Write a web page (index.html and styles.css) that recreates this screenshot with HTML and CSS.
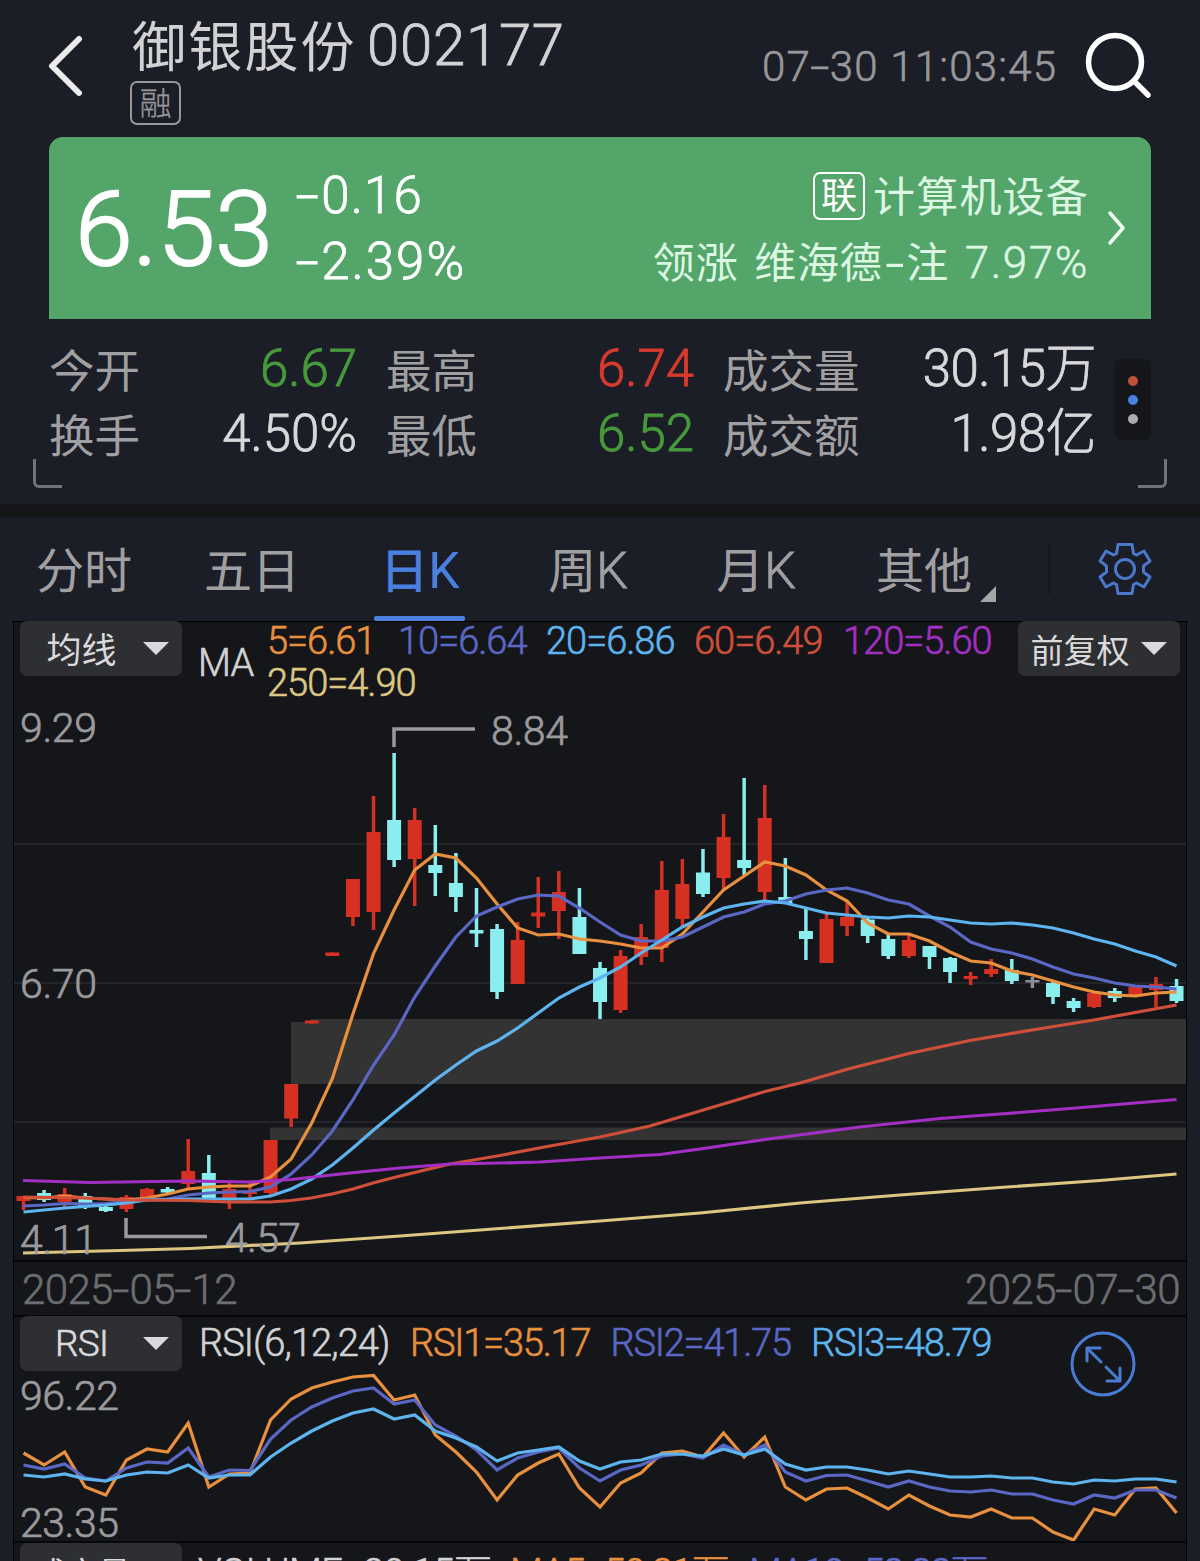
FILE: index.html
```html
<!DOCTYPE html>
<html lang="zh-CN">
<head>
    <meta charset="UTF-8">
    <meta name="viewport" content="width=device-width, initial-scale=1.0">
    <title>御银股份 002177</title>
    <link rel="stylesheet" href="styles.css">
</head>
<body>
    <header class="header">
        <svg class="back" viewBox="0 0 40 64" width="40" height="64"><path d="M33 6 L6 33 L33 60"/></svg>
        <div class="title">
            <h1><span class="stock-name">御银股份</span><span class="stock-code">002177</span></h1>
            <span class="badge badge-rong">融</span>
        </div>
        <div class="time">07<span class="dash">-</span>30 11:03:45</div>
        <svg class="search" viewBox="0 0 70 70" width="70" height="70"><circle cx="32" cy="31" r="26.5"/><path d="M51 50 L65 64"/></svg>
    </header>

    <section class="quote">
        <div class="price">6.53</div>
        <div class="change">
            <div><span class="dash">-</span>0.16</div>
            <div class="percent"><span class="dash">-</span>2.39%</div>
        </div>
        <div class="sector">
            <div class="sector-name"><span class="badge badge-lian">联</span><span>计算机设备</span></div>
            <div class="leader">领涨 维海德<span class="dash">-</span>注 <span class="leader-value">7.97%</span></div>
        </div>
        <svg class="more" viewBox="0 0 20 36" width="20" height="36"><path d="M3 3 L16 18 L3 33"/></svg>
    </section>

    <section class="stats">
        <div class="stats-grid">
            <div class="stat"><span>今开</span><b class="down">6.67</b></div>
            <div class="stat"><span>最高</span><b class="up">6.74</b></div>
            <div class="stat"><span>成交量</span><b class="big">30.15万</b></div>
            <div class="stat"><span>换手</span><b>4.50%</b></div>
            <div class="stat"><span>最低</span><b class="down">6.52</b></div>
            <div class="stat"><span>成交额</span><b class="big">1.98亿</b></div>
        </div>
        <div class="dots"><i class="dot-red"></i><i class="dot-blue"></i><i class="dot-grey"></i></div>
        <i class="corner corner-left"></i>
        <i class="corner corner-right"></i>
    </section>

    <nav class="tabs">
        <div class="tab">分时</div>
        <div class="tab">五日</div>
        <div class="tab active">日<span>K</span></div>
        <div class="tab">周<span>K</span></div>
        <div class="tab">月<span>K</span></div>
        <div class="tab tab-more">其他</div>
        <div class="settings">
            <svg viewBox="-30 -30 60 60" width="60" height="60">
                <path d="M-7 -24.5 H7 L8.5 -15.5 L11.5 -14 L19 -18 L25 -8 L18.5 -3 V3 L25 8 L19 18 L11.5 14 L8.5 15.5 L7 24.5 H-7 L-8.5 15.5 L-11.5 14 L-19 18 L-25 8 L-18.5 3 V-3 L-25 -8 L-19 -18 L-11.5 -14 L-8.5 -15.5 Z"/>
                <circle r="9.5"/>
            </svg>
        </div>
    </nav>

    <main class="charts">
        <section class="panel k-panel">
            <div class="k-head">
                <button class="select">均线</button>
                <span class="ma-label">MA</span>
                <div class="ma-list">
                    <span class="c-orange">5=6.61</span>
                    <span class="c-indigo">10=6.64</span>
                    <span class="c-sky">20=6.86</span>
                    <span class="c-red">60=6.49</span>
                    <span class="c-purple">120=5.60</span>
                    <span class="c-yellow">250=4.90</span>
                </div>
                <button class="select select-right">前复权</button>
            </div>
            <svg id="kChart" class="chart" viewBox="14 700 1172 560" width="1172" height="560"></svg>
        </section>

        <section class="panel dates">
            <span>2025<i class="dash">-</i>05<i class="dash">-</i>12</span>
            <span>2025<i class="dash">-</i>07<i class="dash">-</i>30</span>
        </section>

        <section class="panel rsi-panel">
            <div class="rsi-head">
                <button class="select select-latin">RSI</button>
                <span class="rsi-name">RSI(6,12,24)</span>
                <span class="c-orange">RSI1=35.17</span>
                <span class="c-indigo">RSI2=41.75</span>
                <span class="c-sky">RSI3=48.79</span>
            </div>
            <svg id="rsiChart" class="chart" viewBox="14 1371 1172 170" width="1172" height="170"></svg>
            <svg class="expand" viewBox="0 0 66 66" width="66" height="66">
                <circle cx="33" cy="33" r="31"/>
                <path d="M30 17 H17 V30 M17 17 L31 31 M36 36 L50 50 M50 37 V50 H37"/>
            </svg>
        </section>

        <section class="panel vol-panel">
            <button class="select select-vol">成交量</button>
            <span class="vol-name">VOLUME=30.15万</span>
            <span class="c-orange">MA5=50.21万</span>
            <span class="c-indigo">MA10=58.82万</span>
        </section>
    </main>

    <script src="script.js"></script>
</body>
</html>
```
FILE: styles.css
```css
* {
    box-sizing: border-box;
}
body {
    margin: 0;
    width: 1200px;
    height: 1561px;
    overflow: hidden;
    background-color: #1b1e26;
    color: #d2d2d4;
    font-family: Roboto, "Noto Sans CJK SC", sans-serif;
    font-weight: 300;
    -webkit-text-stroke: 0.6px;
}
svg {
    display: block;
    fill: none;
    stroke-linecap: round;
    stroke-linejoin: round;
}
.dash {
    display: inline-block;
    margin: 0 0.08em;
    font-style: normal;
    letter-spacing: 0;
    transform: scaleX(1.65);
}

/* header */
.header {
    display: flex;
    height: 137px;
    padding-left: 46px;
}
.back {
    margin-top: 33px;
    stroke: #ececec;
    stroke-width: 6;
}
.title {
    margin-left: 44px;
    width: 600px;
}
.title h1 {
    display: flex;
    margin: 15px 0 6px 2px;
    font-size: 58px;
    line-height: 60px;
    font-weight: 300;
}
.stock-name {
    position: relative;
    top: 4px;
    font-size: 54px;
    font-weight: 400;
    letter-spacing: 2.2px;
    width: 235px;
    -webkit-text-stroke: 0;
}
.stock-code {
    letter-spacing: 0.8px;
    -webkit-text-stroke: 0.8px;
}
.badge {
    display: flex;
    align-items: center;
    justify-content: center;
    border: 2px solid;
    border-radius: 7px;
}
.badge-rong {
    width: 51px;
    height: 44px;
    padding-top: 2px;
    font-size: 32px;
    line-height: 38px;
    color: #98989b;
    -webkit-text-stroke: 0.3px;
}
.time {
    margin-top: 42px;
    width: 324px;
    margin-left: 32px;
    font-size: 42px;
    line-height: 50px;
    letter-spacing: 1.2px;
    color: #98989b;
    white-space: nowrap;
}
.search {
    flex: none;
    margin-top: 31px;
    margin-left: -3px;
    stroke: #fff;
    stroke-width: 5.5;
}

/* green price card */
.quote {
    display: flex;
    height: 182px;
    margin: 0 49px;
    border-radius: 14px 14px 0 0;
    background-color: #53a56a;
    color: #fff;
}
.price {
    width: 247px;
    padding: 33px 0 0 26px;
    font-size: 104px;
    line-height: 120px;
    -webkit-text-stroke: 2px;
}
.change {
    padding-top: 26px;
    font-size: 51px;
    line-height: 66px;
    letter-spacing: 1.1px;
    -webkit-text-stroke: 0.8px;
}
.change .dash {
    margin: 0 0.14em 0 0.07em;
}
.percent {
    letter-spacing: 2px;
}
.sector {
    flex: 1;
    padding-top: 29px;
    text-align: right;
    font-size: 42px;
    line-height: 66px;
    color: #dcf7e2;
}
.sector-name {
    display: flex;
    align-items: center;
    justify-content: flex-end;
    height: 64px;
    letter-spacing: 1.2px;
    font-weight: 400;
    -webkit-text-stroke: 0;
}
.badge-lian {
    width: 52px;
    height: 48px;
    margin-right: 8px;
    margin-top: -5px;
    padding-top: 2px;
    font-size: 36px;
    line-height: 42px;
    letter-spacing: 0;
    color: #fff;
}
.leader {
    letter-spacing: 0.8px;
    word-spacing: 4.5px;
    font-weight: 400;
    -webkit-text-stroke: 0;
}
.leader .dash {
    margin: 0 6px;
}
.leader-value {
    font-size: 44px;
    font-weight: 300;
    letter-spacing: 1.6px;
    -webkit-text-stroke: 0.6px;
}
.more {
    margin: 73px 24px 0 18px;
    stroke: #f0fff2;
    stroke-width: 3.5;
}

/* numbers under the card */
.stats {
    position: relative;
    display: flex;
    height: 185px;
    padding: 17px 49px 0;
}
.stats-grid {
    display: grid;
    grid-template-columns: 308px 308px 373px;
    grid-template-rows: 65px 65px;
    column-gap: 29px;
}
.stat {
    display: flex;
    align-items: center;
    justify-content: space-between;
    line-height: 65px;
    color: #a0a0a3;
}
.stat span {
    padding-top: 8px;
    font-size: 45.5px;
    font-weight: 400;
    -webkit-text-stroke: 0;
}
.stat b {
    font-size: 51px;
    font-weight: 300;
    color: #d8d8da;
    -webkit-text-stroke: 0.8px;
}
.stat .big {
    letter-spacing: -0.5px;
}
.stat .down {
    color: #479a3b;
}
.stat .up {
    color: #d83a2d;
}
.dots {
    display: flex;
    flex-direction: column;
    align-items: center;
    justify-content: center;
    gap: 9px;
    width: 36px;
    height: 81px;
    margin: 23px 0 0 19px;
    border-radius: 6px;
    background-color: #14161a;
}
.dots i {
    width: 10px;
    height: 10px;
    border-radius: 50%;
}
.dot-red {
    background-color: #bd513a;
}
.dot-blue {
    background-color: #4a80e6;
}
.dot-grey {
    background-color: #acacb0;
}
.corner {
    position: absolute;
    bottom: 16px;
    width: 29px;
    height: 29px;
    border-bottom: 3px solid #717276;
}
.corner-left {
    left: 33px;
    border-left: 3px solid #717276;
    border-bottom-left-radius: 6px;
}
.corner-right {
    right: 33px;
    border-right: 3px solid #717276;
    border-bottom-right-radius: 6px;
}

/* period tabs */
.tabs {
    display: grid;
    grid-template-columns: repeat(6, 168px) 192px;
    height: 117px;
    border-top: 13px solid #15161a;
}
.tab {
    position: relative;
    text-align: center;
    font-size: 48px;
    font-weight: 400;
    line-height: 109px;
    color: #a0a0a3;
    -webkit-text-stroke: 0;
}
.tab span {
    font-size: 50px;
    font-weight: 300;
    -webkit-text-stroke: 0.8px;
}
.tab.active {
    color: #4a80e0;
    -webkit-text-stroke: 0.8px;
}
.tab.active span {
    font-weight: 400;
    -webkit-text-stroke: 0;
}
.tab.active::after {
    content: "";
    position: absolute;
    left: 38px;
    top: 99px;
    width: 91px;
    height: 5px;
    border-radius: 2px;
    background-color: #4a80e0;
}
.tab-more::after {
    content: "";
    position: absolute;
    right: 12px;
    top: 69px;
    border-left: 16px solid transparent;
    border-bottom: 16px solid #a5a5a7;
}
.settings {
    height: 50px;
    margin: 27px 0 0 40px;
    border-left: 2px solid #14161b;
}
.settings svg {
    margin: -5px 0 0 45px;
    stroke: #4a78cc;
    stroke-width: 3;
}

/* chart panels */
.charts {
    width: 1174px;
    margin: 0 auto;
    border: 1px solid #000;
    border-bottom: 0;
    background-color: #15161a;
    font-size: 38px;
}
.panel {
    position: relative;
}
.chart {
    overflow: visible;
    stroke-linecap: butt;
}
.select {
    position: relative;
    flex: none;
    width: 162px;
    height: 55px;
    margin: 0 0 0 6px;
    padding: 2px 52px 0 13px;
    border: 0;
    border-radius: 7px;
    background-color: #2e2f33;
    color: #dadadc;
    font: 400 35px/58px Roboto, "Noto Sans CJK SC", sans-serif;
    text-align: center;
    white-space: nowrap;
    -webkit-text-stroke: 0;
}
.select::after {
    content: "";
    position: absolute;
    right: 13px;
    top: 21px;
    border: 13px solid transparent;
    border-top-color: #dadadc;
    border-bottom: 0;
}
.select-latin {
    padding-top: 0;
    font-size: 37px;
    font-weight: 300;
    line-height: 55px;
    letter-spacing: -0.8px;
    -webkit-text-stroke: 0.6px;
}
.select-vol {
    padding-right: 50px;
    font-size: 32px;
}
.c-orange {
    color: #e8903e;
}
.c-indigo {
    color: #5a67c4;
}
.c-sky {
    color: #5db4ee;
}
.c-red {
    color: #cf4f3a;
}
.c-purple {
    color: #a42fc4;
}
.c-yellow {
    color: #dcc682;
}
.k-head {
    display: flex;
    height: 78px;
    margin-top: -1px;
}
.ma-label {
    width: 85px;
    padding: 21px 0 0 16px;
    line-height: 42px;
    letter-spacing: -0.8px;
}
.ma-list {
    display: grid;
    grid-template-columns: 131px 148px 148px 149px 160px;
    grid-auto-rows: 42px;
    width: 751px;
    margin-top: -1px;
    line-height: 42px;
    letter-spacing: -1px;
    white-space: nowrap;
}
.select-right {
    margin-left: 0;
    padding-left: 10px;
    padding-right: 48px;
    font-size: 33px;
}
.k-panel {
    height: 639px;
}
.k-panel .chart {
    margin-top: 1px;
}
.dates {
    display: flex;
    justify-content: space-between;
    height: 55px;
    padding: 0 6px 0 8px;
    border-top: 2px solid #07080a;
    font-size: 42px;
    line-height: 56px;
    letter-spacing: -0.6px;
    color: #6c6d70;
}
.dates .dash {
    margin: 0 2.3px;
    transform: scaleX(1.45);
}
.rsi-panel {
    height: 226px;
    border-top: 2px solid #07080a;
}
.rsi-head {
    display: flex;
    height: 55px;
    margin-top: -1px;
    line-height: 55px;
    letter-spacing: -1.2px;
}
.rsi-head span {
    width: 200.5px;
}
.rsi-head .rsi-name {
    width: 228px;
    padding-left: 17px;
    letter-spacing: -0.9px;
}
.rsi-panel .chart {
    margin-top: 1px;
}
.expand {
    position: absolute;
    left: 1055.5px;
    top: 14px;
    stroke: #4a7bd2;
    stroke-width: 3;
}
.vol-panel {
    display: flex;
    height: 22px;
    overflow: hidden;
    border-top: 2px solid #07080a;
    line-height: 60px;
}
.vol-panel span {
    width: 239px;
    white-space: nowrap;
    letter-spacing: -1.2px;
}
.vol-panel .vol-name {
    width: 328px;
    padding-left: 16px;
    letter-spacing: -0.5px;
}

/* svg parts */
.grid {
    stroke: #232427;
    stroke-width: 2;
}
.gap {
    fill: #333;
}
.axis {
    fill: #9a9a9d;
    stroke: #9a9a9d;
    stroke-width: 0.7;
    font-size: 41px;
}
.mark {
    stroke: #9a9a9d;
    stroke-width: 3.5;
    stroke-linejoin: miter;
}
.line {
    stroke-width: 3.2;
    stroke-linejoin: miter;
}
```
FILE: script.js
```javascript
const STEP = 20.59;
const FIRST = 23.5;
const RED = '#d63022';
const CYAN = '#8aeeee';
const GREY = '#8c8d96';

// [type, high, body top, body bottom, low]
const candles = [
    ['r', 1196, 1196, 1201, 1210], ['c', 1190, 1193, 1200, 1202], ['r', 1188, 1194, 1202, 1207],
    ['c', 1193, 1196, 1207, 1209], ['c', 1206, 1207, 1211, 1212], ['r', 1195, 1197, 1209, 1212],
    ['r', 1188, 1189, 1199, 1201], ['c', 1187, 1189, 1192.5, 1194], ['r', 1139, 1171, 1184, 1188],
    ['c', 1155, 1173, 1198, 1198], ['r', 1183, 1189, 1200, 1209], ['r', 1183, 1192, 1194, 1200],
    ['r', 1140, 1140, 1193, 1197], ['r', 1084, 1084, 1118.5, 1127], ['r', 1020.5, 1020.5, 1023.5, 1023.5],
    ['r', 952.5, 952.5, 956, 956], ['r', 879, 879, 917, 926], ['r', 796, 832, 912, 930],
    ['c', 753, 820, 860, 867], ['r', 808, 820, 859, 906], ['c', 825, 865, 873, 896],
    ['c', 853, 883, 897, 912], ['c', 888, 930, 933.5, 947], ['c', 924, 929, 992, 999],
    ['r', 922, 940, 984, 984], ['r', 877, 912.5, 916.5, 928], ['r', 871, 892, 911, 939],
    ['c', 888, 917, 954, 954], ['c', 962, 968, 1002, 1019], ['r', 950, 956, 1010, 1013],
    ['r', 924, 937, 957, 965], ['r', 861, 890, 948, 962], ['r', 859, 884, 919, 927],
    ['c', 849, 872.5, 894, 897], ['r', 814, 837, 878, 890], ['c', 778, 860, 868, 875],
    ['r', 785, 818, 892, 901], ['c', 858, 897, 904, 904], ['c', 909, 931, 939, 960],
    ['r', 913, 919, 963, 963], ['r', 902, 917, 926, 936], ['c', 918, 919.5, 936, 943],
    ['c', 934, 939, 956, 959], ['r', 935, 940, 956, 958], ['c', 946, 946, 957, 969],
    ['c', 957, 958, 972, 983], ['r', 972, 976, 979, 985], ['r', 959, 969, 974, 977],
    ['c', 959, 970, 981, 984], ['g', 977, 980, 982.5, 988], ['c', 980, 983, 997, 1004],
    ['c', 998, 1001, 1008, 1012], ['r', 993, 993, 1007, 1008], ['c', 988, 991, 998, 1002],
    ['r', 987, 987, 995, 995], ['r', 977, 984, 990, 1007], ['c', 979, 986, 1001, 1003]
];

const ma5 = [1197.5, 1198, 1196, 1198, 1199, 1200, 1198, 1194, 1189, 1187, 1186, 1186, 1177, 1159, 1123, 1078.5, 1014, 953.5, 910, 870, 854, 858, 878, 904, 928, 935, 934, 939, 941, 944, 948, 948, 934, 912, 890, 876, 862, 866, 875, 890, 901, 923, 934, 934, 941, 952, 961, 963, 971, 975, 981, 987, 992, 995, 996, 993, 992];
const ma10 = [1206, 1205, 1203.5, 1204, 1203.5, 1201.5, 1199.5, 1199, 1195, 1193, 1192, 1191.5, 1187, 1174, 1155, 1131, 1100, 1065, 1035, 997, 966, 937, 916, 907, 899, 895, 896, 908, 922, 935, 941, 941, 937, 927, 917, 912, 904, 901, 894, 890, 888, 893, 900, 904, 916, 927, 942, 949, 953, 959, 967, 974, 978, 983, 986, 987, 989];
const ma20 = [1212, 1210, 1208, 1206.5, 1205, 1203, 1200, 1199.5, 1199, 1199, 1199, 1199, 1196, 1189, 1179, 1165, 1148, 1130, 1113, 1096.5, 1080, 1065, 1051, 1041, 1028, 1013, 998, 987, 978, 967, 953, 940, 927, 917, 908, 904, 901, 903, 908, 913, 915, 917, 918, 916, 917, 920, 923, 924, 923, 925, 928, 933, 939, 944, 951, 957, 966];

// long averages: x, y pairs
const ma60 = '23,1197 85,1198 126,1200 188,1200.5 229,1202 270,1202 291,1200.5 311,1198 332,1194 353,1189 373,1183 394,1177.5 450,1164 500,1155.5 550,1146 600,1137 650,1126 700,1111 750,1096 765,1091.5 800,1083 850,1068.5 909,1053.5 970,1040.5 1032,1030 1094,1020 1176.5,1005';
const ma120 = '23,1180.5 90,1182.5 187,1181 250,1182 291,1179.5 350,1173 400,1168 450,1164 500,1163 540,1162 600,1158 660,1154.5 700,1149 765,1139.5 860,1127 940,1118.5 1000,1114 1070,1108.5 1176.5,1099.5';
const ma250 = '23,1253 120,1250.5 190,1248.5 300,1243 400,1236 500,1228.5 600,1221 700,1213 800,1203 900,1195 1000,1187.5 1100,1180.5 1176.5,1174';

const rsi1 = [1452, 1464, 1451, 1486, 1494, 1459, 1448, 1451, 1422, 1486, 1473, 1472, 1419, 1398, 1387, 1381, 1376, 1374.5, 1399, 1394, 1434, 1451, 1471, 1499, 1474, 1462, 1453, 1487, 1506, 1482, 1472, 1452, 1450, 1456, 1432, 1456, 1436, 1486, 1499, 1488, 1487, 1497, 1508, 1494, 1505, 1514, 1516, 1508, 1517, 1517, 1531, 1539, 1508, 1514, 1488, 1487, 1512];
const rsi2 = [1464, 1468, 1463, 1477, 1480, 1467, 1461, 1462, 1447, 1476, 1469, 1469.5, 1438, 1419, 1406, 1397, 1390, 1387, 1403, 1399, 1424, 1435, 1449, 1469, 1457, 1451, 1447, 1467, 1480, 1469, 1464, 1455, 1453, 1457, 1444, 1454, 1444, 1471, 1480, 1474.5, 1474, 1480, 1486, 1480, 1486, 1490, 1491, 1489, 1493, 1493, 1499, 1503, 1494, 1497, 1489, 1489, 1497];
const rsi3 = [1474, 1476, 1473, 1478, 1480, 1474, 1471, 1472, 1464, 1477, 1474, 1474, 1456, 1442, 1430, 1420, 1412, 1408, 1418, 1414, 1430, 1437, 1446, 1460, 1452, 1449, 1446, 1460, 1468, 1461, 1459, 1453, 1453, 1455, 1448, 1454, 1448, 1463, 1469, 1466, 1466, 1469, 1473, 1470, 1473, 1476, 1476, 1475, 1477, 1477, 1481, 1483, 1479, 1480, 1478, 1478, 1481];

function xAt(i) {
    return FIRST + i * STEP;
}

function line(values, color) {
    const points = typeof values === 'string' ? values : values.map((y, i) => xAt(i) + ',' + y).join(' ');
    return `<polyline class="line" stroke="${color}" points="${points}"/>`;
}

function label(text, x, y, width) {
    return `<text class="axis" x="${x}" y="${y}" textLength="${width}">${text}</text>`;
}

function candle(c, i) {
    const color = { r: RED, c: CYAN, g: GREY }[c[0]];
    const x = xAt(i);
    return `<path stroke="${color}" stroke-width="3.5" d="M${x} ${c[1]}V${c[4]}"/>` +
        `<rect fill="${color}" x="${x - 7}" y="${c[2]}" width="14" height="${c[3] - c[2]}"/>`;
}

document.getElementById('kChart').innerHTML =
    '<path class="grid" d="M14 844H1186M14 983H1186M14 1122H1186"/>' +
    '<path class="gap" d="M291 1022H311V1019H1186V1084H291ZM270 1127.5H1186V1140H270Z"/>' +
    candles.map(candle).join('') +
    '<path class="mark" d="M394 747V729H475M126 1218V1236.5H207"/>' +
    line(ma5, '#e8903e') +
    line(ma10, '#5a67c4') +
    line(ma20, '#5db4ee') +
    line(ma60, '#cf4f3a') +
    line(ma120, '#a42fc4') +
    line(ma250, '#dcc682') +
    label('9.29', 20, 741.5, 77) +
    label('6.70', 20, 997.5, 77) +
    label('4.11', 20, 1254, 77) +
    label('8.84', 491, 744.5, 77) +
    label('4.57', 225, 1252, 76);

document.getElementById('rsiChart').innerHTML =
    label('96.22', 20, 1408.5, 99) +
    label('23.35', 20, 1535.5, 99) +
    line(rsi1, '#e8903e') +
    line(rsi2, '#5a67c4') +
    line(rsi3, '#5db4ee');
```
